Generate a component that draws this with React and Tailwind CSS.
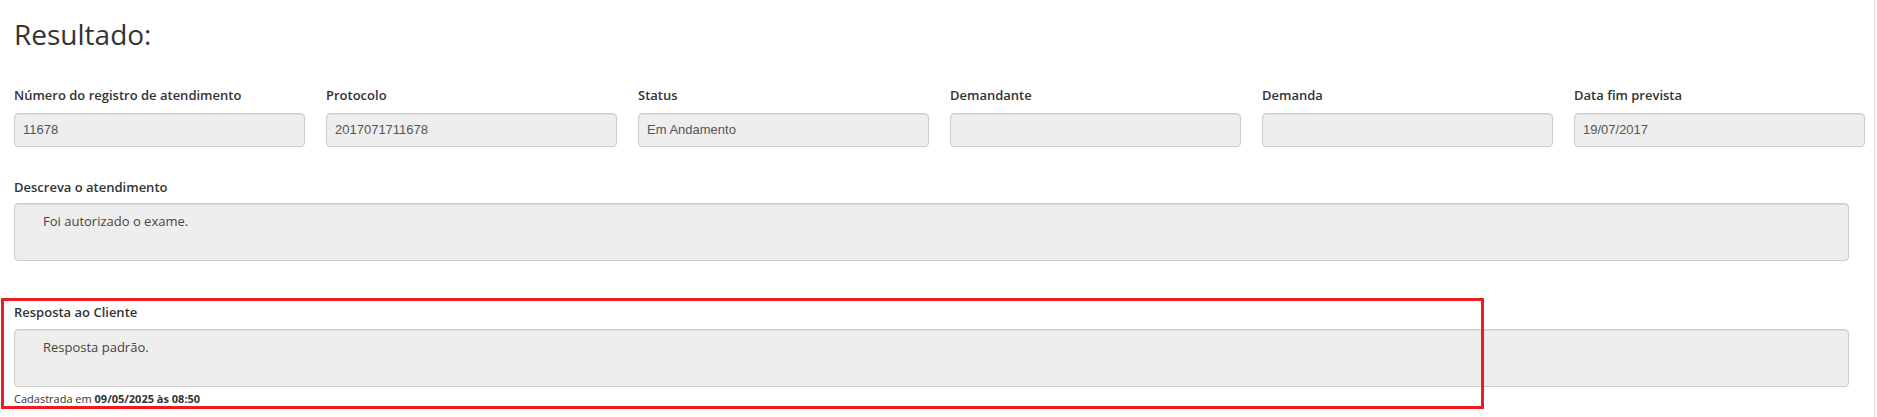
import React from 'react';

const campos = [
  { label: 'Número do registro de atendimento', value: '11678' },
  { label: 'Protocolo', value: '2017071711678' },
  { label: 'Status', value: 'Em Andamento' },
  { label: 'Demandante', value: '' },
  { label: 'Demanda', value: '' },
  { label: 'Data fim prevista', value: '19/07/2017' },
];

const Campo = ({ label, value }) => (
  <div>
    <label className="block text-[13px] leading-[18px] font-semibold text-[#333] mb-[9px] whitespace-nowrap">
      {label}
    </label>
    <div className="h-[34px] rounded-[4px] border border-[#ccc] bg-[#eee] px-[8px] flex items-center text-[13px] text-[#555] font-['Liberation_Sans',Arial,sans-serif] shadow-[inset_0_1px_1px_rgba(0,0,0,0.075)]">
      {value}
    </div>
  </div>
);

const Caixa = ({ children }) => (
  <div className="w-[1835px] h-[58px] rounded-[4px] border border-[#ccc] bg-[#eee] pl-[28px] pt-[7px] text-[13px] leading-[20px] text-[#444] shadow-[inset_0_1px_1px_rgba(0,0,0,0.075)]">
    {children}
  </div>
);

export default function App() {
  return (
    <div className="flex min-h-[417px] bg-[#f7f7f7] font-['Open_Sans',sans-serif]">
      <div className="relative w-[1875px] shrink-0 bg-white border-r border-[#e3e3e3] pl-[14px] pb-[10px]">
        <h3 className="pt-[17px] text-[28px] leading-[34px] font-medium text-[#333]">Resultado:</h3>

        <div className="mt-[35px] grid grid-cols-6 gap-x-[21px] w-[1851px]">
          {campos.map((c) => (
            <Campo key={c.label} {...c} />
          ))}
        </div>

        <div className="mt-[31px]">
          <label className="block text-[13px] leading-[18px] font-semibold text-[#333] mb-[7px]">
            Descreva o atendimento
          </label>
          <Caixa>Foi autorizado o exame.</Caixa>
        </div>

        <div className="mt-[42px]">
          <label className="block text-[13px] leading-[18px] font-semibold text-[#333] mb-[8px]">
            Resposta ao Cliente
          </label>
          <Caixa>Resposta padrão.</Caixa>
          <p className="mt-[4px] text-[11px] leading-[15px] text-[#333]">
            Cadastrada em <span className="font-bold">09/05/2025 às 08:50</span>
          </p>
        </div>

        {/* destaque vermelho por cima da resposta */}
        <div className="pointer-events-none absolute left-[1px] top-[298px] w-[1483px] h-[111px] border-[3px] border-[#ed1c24]" />
      </div>
    </div>
  );
}
